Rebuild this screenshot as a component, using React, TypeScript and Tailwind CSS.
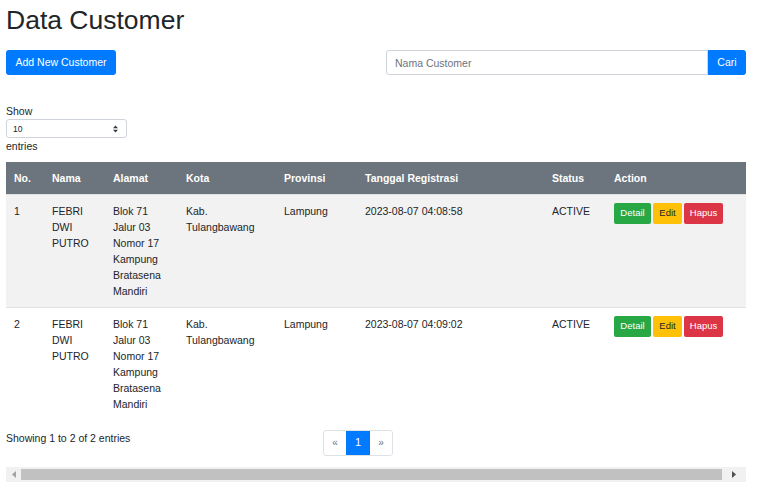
import React from 'react';

interface Customer {
  no: number;
  nama: string[];
  alamat: string[];
  kota: string[];
  provinsi: string;
  tanggal: string;
  status: string;
}

const customers: Customer[] = [
  {
    no: 1,
    nama: ['FEBRI', 'DWI', 'PUTRO'],
    alamat: ['Blok 71', 'Jalur 03', 'Nomor 17', 'Kampung', 'Bratasena', 'Mandiri'],
    kota: ['Kab.', 'Tulangbawang'],
    provinsi: 'Lampung',
    tanggal: '2023-08-07 04:08:58',
    status: 'ACTIVE',
  },
  {
    no: 2,
    nama: ['FEBRI', 'DWI', 'PUTRO'],
    alamat: ['Blok 71', 'Jalur 03', 'Nomor 17', 'Kampung', 'Bratasena', 'Mandiri'],
    kota: ['Kab.', 'Tulangbawang'],
    provinsi: 'Lampung',
    tanggal: '2023-08-07 04:09:02',
    status: 'ACTIVE',
  },
];

const columns = [
  { label: 'No.', w: 'w-[38px]' },
  { label: 'Nama', w: 'w-[61px]' },
  { label: 'Alamat', w: 'w-[73px]' },
  { label: 'Kota', w: 'w-[98px]' },
  { label: 'Provinsi', w: 'w-[81px]' },
  { label: 'Tanggal Registrasi', w: 'w-[187px]' },
  { label: 'Status', w: 'w-[62px]' },
  { label: 'Action', w: 'w-[140px]' },
];

const Lines: React.FC<{ items: string[] }> = ({ items }) => (
  <>
    {items.map((t, i) => (
      <div key={i}>{t}</div>
    ))}
  </>
);

const App: React.FC = () => {
  return (
    <div className="min-h-[494px] bg-white px-[6px] text-[#212529] font-['Liberation_Sans',Arial,sans-serif]">
      <div className="w-[740px]">
        <h3 className="pt-[3px] text-[26.5px] leading-[34px] font-normal">Data Customer</h3>

        {/* Toolbar */}
        <div className="mt-[13px] flex items-center justify-between">
          <button className="h-[25px] w-[110px] rounded-[3px] bg-[#007bff] pt-[1px] text-[10.5px] text-white">
            Add New Customer
          </button>
          <div className="flex">
            <input
              type="text"
              placeholder="Nama Customer"
              className="h-[25px] w-[322px] rounded-l-[3px] border border-[#ced4da] px-[8px] text-[10.5px] placeholder:text-[#6c757d] outline-none"
            />
            <button className="h-[25px] w-[38px] rounded-r-[3px] bg-[#007bff] text-[10.5px] text-white">Cari</button>
          </div>
        </div>

        {/* Show entries */}
        <div className="mt-[29px] text-[10.5px] leading-[14px]">
          <div>Show</div>
          <div className="relative mt-[1px] flex h-[19px] w-[121px] items-center rounded-[3px] border border-[#ced4da] px-[6px] text-[8.5px]">
            10
            <svg className="absolute right-[8px] top-[5px]" width="5" height="8" viewBox="0 0 5 8">
              <path d="M0 3.2 L2.5 0.5 L5 3.2 Z M0 4.8 L2.5 7.5 L5 4.8 Z" fill="#343a40" />
            </svg>
          </div>
          <div className="mt-[1px]">entries</div>
        </div>

        {/* Table */}
        <table className="mt-[9px] w-[740px] table-fixed border-collapse text-[10.5px] leading-[16px]">
          <thead>
            <tr className="bg-[#6c757d] text-white">
              {columns.map((c) => (
                <th key={c.label} className={`${c.w} h-[32px] px-[8px] text-left font-bold`}>
                  {c.label}
                </th>
              ))}
            </tr>
          </thead>
          <tbody>
            {customers.map((c, i) => (
              <tr key={c.no} className={`${i % 2 === 0 ? 'bg-[#f2f2f2]' : 'bg-white'} border-t border-[#dee2e6] align-top`}>
                <td className="px-[8px] py-[8px]">{c.no}</td>
                <td className="px-[8px] py-[8px]">
                  <Lines items={c.nama} />
                </td>
                <td className="px-[8px] py-[8px]">
                  <Lines items={c.alamat} />
                </td>
                <td className="px-[8px] py-[8px]">
                  <Lines items={c.kota} />
                </td>
                <td className="px-[8px] py-[8px]">{c.provinsi}</td>
                <td className="px-[8px] py-[8px]">{c.tanggal}</td>
                <td className="px-[8px] py-[8px]">{c.status}</td>
                <td className="px-[8px] py-[8px]">
                  <div className="flex gap-[2px] text-[9.5px]">
                    <button className="h-[21px] w-[37px] rounded-[2px] bg-[#28a745] text-white">Detail</button>
                    <button className="h-[21px] w-[29px] rounded-[2px] bg-[#ffc107] text-[#212529]">Edit</button>
                    <button className="h-[21px] w-[39px] rounded-[2px] bg-[#dc3545] text-white">Hapus</button>
                  </div>
                </td>
              </tr>
            ))}
          </tbody>
        </table>

        {/* Footer */}
        <div className="mt-[10px] flex items-start">
          <div className="w-[317px] pt-[1px] text-[10.5px]">Showing 1 to 2 of 2 entries</div>
          <div className="flex h-[26px] rounded-[3px] border border-[#dee2e6] text-[11px]">
            <span className="flex w-[22px] items-center justify-center text-[10px] text-[#6c757d]">«</span>
            <span className="flex w-[24px] items-center justify-center bg-[#007bff] text-white">1</span>
            <span className="flex w-[22px] items-center justify-center text-[10px] text-[#6c757d]">»</span>
          </div>
        </div>

        {/* Scrollbar */}
        <div className="mt-[11px] flex h-[15px] w-[740px] items-center bg-[#f1f1f1]">
          <div className="flex w-[15px] justify-center">
            <svg width="4" height="7" viewBox="0 0 4 7">
              <path d="M4 0 L0 3.5 L4 7 Z" fill="#a3a3a3" />
            </svg>
          </div>
          <div className="h-[11px] w-[701px] bg-[#c1c1c1]" />
          <div className="flex flex-1 justify-center">
            <svg width="4" height="7" viewBox="0 0 4 7">
              <path d="M0 0 L4 3.5 L0 7 Z" fill="#505050" />
            </svg>
          </div>
        </div>
      </div>
    </div>
  );
};

export default App;
